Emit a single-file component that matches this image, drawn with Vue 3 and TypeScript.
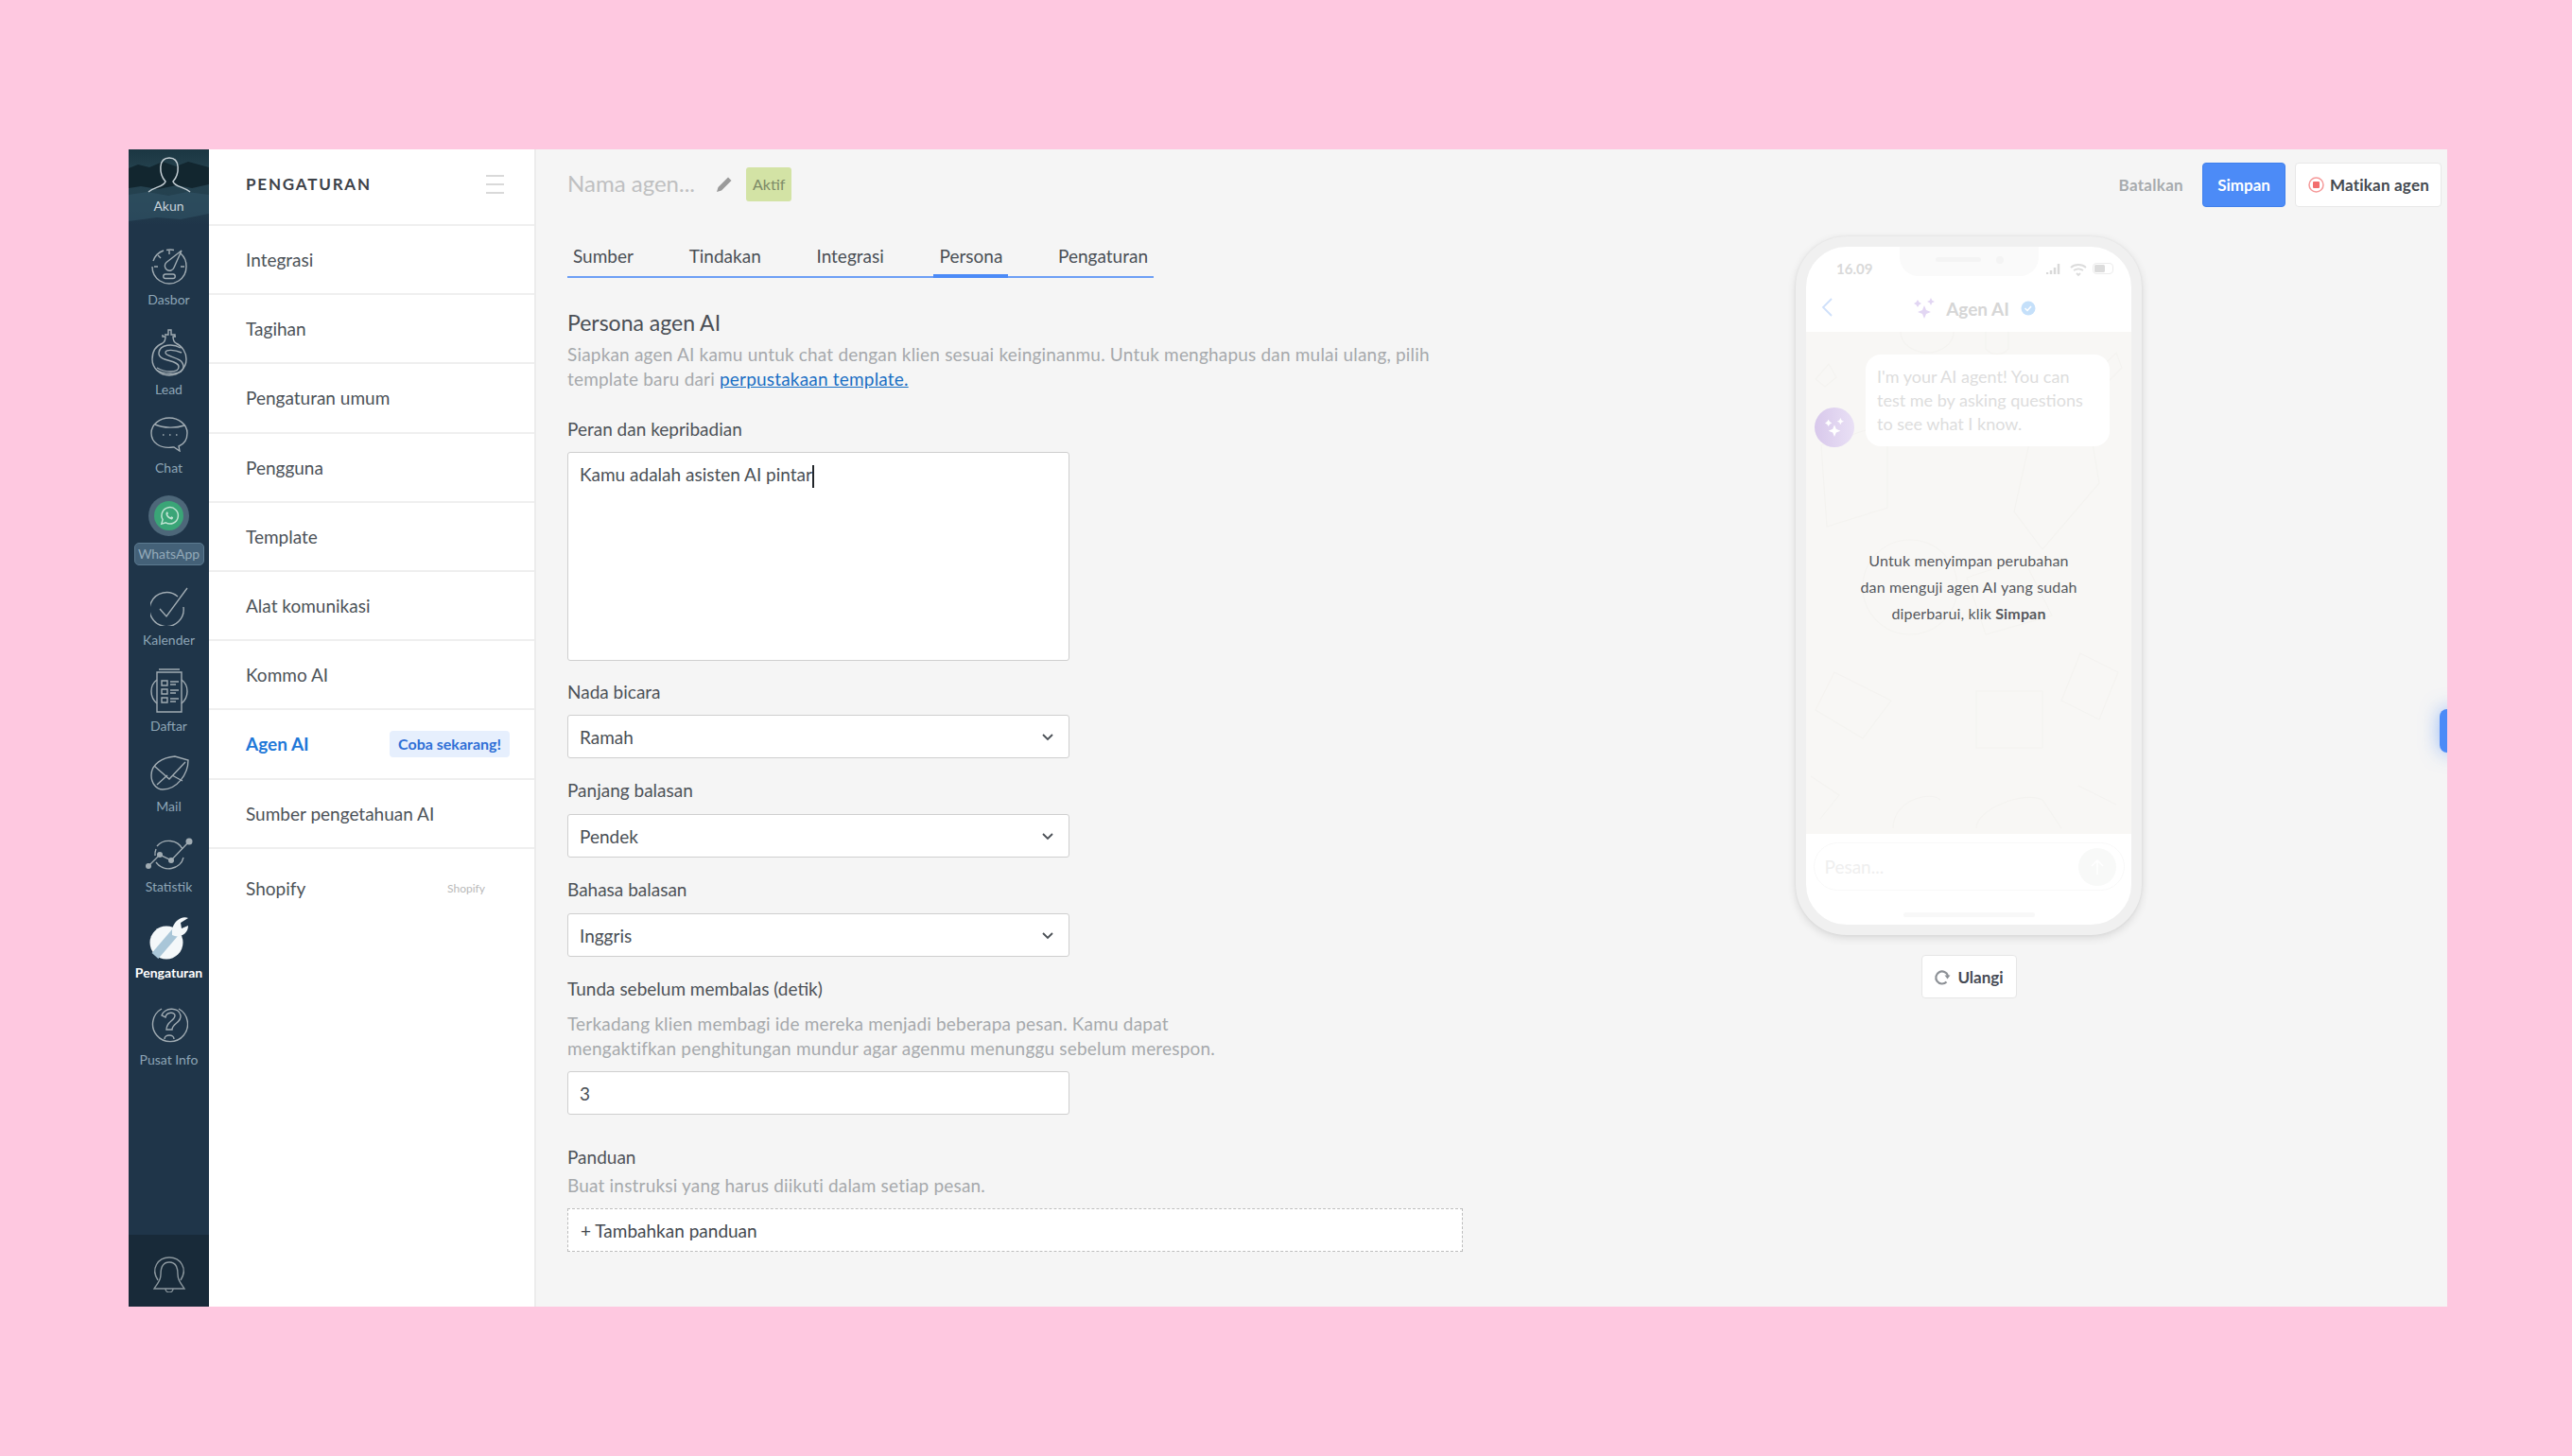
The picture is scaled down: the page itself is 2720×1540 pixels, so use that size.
<script setup lang="ts">
interface SideItem {
  label: string
  h: number
  w: number
  ih: number
  pb: number
  paths: string[]
  dots?: number[][]
}

const sideItems: SideItem[] = [
  {
    label: 'Dasbor', h: 88, w: 40, ih: 40, pb: 6,
    paths: [
      'M14 3A18 18 0 0 0 3 14M2 20a18 18 0 0 0 8 15c6 4 14 4 20 0a18 18 0 0 0 8-15 18 18 0 0 0-6-14M17 2.500a18 18 0 0 1 8 0',
      'M20 3v4M4 20h4M36 20h-4M8 8l3 3',
      'M33 3L25 21a5 5 0 1 1-8-5.500Z',
      'M16 28h8a2.200 2.200 0 0 1 0 4.500h-8a2.200 2.200 0 0 1 0-4.500Z'
    ]
  },
  {
    label: 'Lead', h: 95, w: 38, ih: 50, pb: 5,
    paths: [
      'M12 15C4 18 1 25 1 32a18 17 0 0 0 36 0c0-7-4-14-11-17',
      'M12 15c3-2 3-4 3-7h-3V6M26 15c-3-2-3-4-3-7h3M14 6h4V1h3v5h4v2',
      'M31 20c-8-5-22-4-23 5-1 10 21 7 21 15 0 7-15 6-23 1',
      'M32 25c-7-3-17-4-17 0 0 5 19 4 19 15 0 9-20 9-29 3'
    ]
  },
  {
    label: 'Chat', h: 83, w: 40, ih: 37, pb: 8,
    paths: [
      'M24 32C10 34 1 27 1 17 1 8 10 1 20 1s19 7 19 16c0 7-4 12-9 14l1 5-6-4Z',
      'M5 8c9 4 22 4 31 1',
      'M13 19h1.500M20 19h1.500M27 19h1.500'
    ]
  },
  {
    label: 'Kalender', h: 88, w: 40, ih: 41, pb: 6,
    paths: [
      'M29 10A18 18 0 1 0 35 21',
      'M10 23l7 8L39 1'
    ]
  },
  {
    label: 'Daftar', h: 91, w: 40, ih: 47, pb: 5,
    paths: [
      'M7 4h26v42H7ZM9 1h22',
      'M7 12C-1 18-1 30 7 37M33 12c8 6 8 18 0 25',
      'M12 13h6v5h-6ZM12 22h6v5h-6ZM12 31h6v5h-6Z',
      'M21 14h9M21 17h6M21 23h9M21 26h6M21 32h9M21 35h6'
    ]
  },
  {
    label: 'Mail', h: 85, w: 42, ih: 37, pb: 8,
    paths: [
      'M2 21C2 9 14 2 27 1l14 4c0 15-12 31-27 31C7 36 2 29 2 21Z',
      'M5 11l16 14L38 7M8 31l11-10M35 27l-11-6'
    ]
  },
  {
    label: 'Statistik', h: 85, w: 51, ih: 36, pb: 8,
    paths: [
      'M13 10a16 15 0 0 1 27 3M41 22a16 15 0 0 1-29 5M11 20a16 15 0 0 1 1-7',
      'M4 31L16 19l12 6L47 5'
    ],
    dots: [[4, 31, 3], [16, 19, 3], [28, 25, 3], [47, 5, 3.5]]
  },
  {
    label: 'Pusat Info', h: 92, w: 40, ih: 42, pb: 8,
    paths: [
      'M12 5A18.500 18.500 0 1 0 30 5',
      'M12 12c2-8 18-10 20 0 1 8-9 8-9 15h-6c0-9 9-9 9-15 0-4-9-4-10 2Z',
      'M15 37a5 4 0 0 1 10 0'
    ]
  }
]
</script>

<template>
  <div class="page">
    <div class="app">
      <aside class="side">
        <div class="side-user">
          <svg class="user-bg" width="85" height="80" viewBox="0 0 85 80">
            <path d="M0 20l10-4 12 3 14-6 14 5 13-5 22 6v18l-18 4-16-3-20 4-18-3-13 2Z" fill="#12262f" />
            <path d="M0 48l20-3 22 4 20-4 23 3v20l-30 6-25-2-30 4Z" fill="#2f5062" opacity="0.7" />
          </svg>
          <svg class="user-pic" width="46" height="38" viewBox="0 0 46 38" fill="none">
            <path d="M1 37c7-6 16-5 18-11C12 18 11 1 23 1s11 17 4 25c2 6 11 5 18 11" />
          </svg>
          <span>Akun</span>
        </div>

        <template v-for="(item, i) in sideItems" :key="item.label">
          <a class="side-item" :style="{ height: item.h + 'px' }">
            <svg
              :width="item.w"
              :height="item.ih"
              :viewBox="`0 0 ${item.w} ${item.ih}`"
              :style="{ marginBottom: item.pb + 'px' }"
              fill="none"
            >
              <path v-for="d in item.paths" :key="d" :d="d" />
              <circle v-for="c in item.dots" :key="c[0]" :cx="c[0]" :cy="c[1]" :r="c[2]" class="dot" />
            </svg>
            <span>{{ item.label }}</span>
          </a>

          <a v-if="i === 2" class="side-item side-wa">
            <div class="wa-ring">
              <div class="wa-dot">
                <svg width="22" height="22" viewBox="0 0 24 24" fill="none">
                  <path d="M3 21l1.500-5A9.500 9.500 0 1 1 8 19.500Z" />
                  <path class="wa-phone" d="M8.500 7.500c1-1 1.500-.8 2 .3l.5 1.200-1 1.200c.7 1.400 1.800 2.500 3.300 3.200l1.200-1.100 1.700.9c.6.500.2 1.600-.7 2.300-3 1.300-9-4.500-7-7.800Z" />
                </svg>
              </div>
            </div>
            <span>WhatsApp</span>
          </a>

          <a v-if="i === 6" class="side-item side-active">
            <svg width="42" height="47" viewBox="0 0 42 47">
              <circle cx="18" cy="29" r="17.500" fill="#f4f8fa" />
              <path d="M6 43L30 15" stroke="#a9c6d8" stroke-width="9" />
              <path d="M24 16C25 6 35 0 41 3l-8 5 1 6 7-3c0 9-9 14-17 10Z" fill="#f4f8fa" />
            </svg>
            <span>Pengaturan</span>
          </a>
        </template>

        <div class="side-bell">
          <svg width="38" height="38" viewBox="0 0 38 38" fill="none">
            <path d="M7 25C-1 13 7 1 19 1s20 12 12 24" />
            <path d="M19 6c-8 0-9 7-9 13 0 7-4 10-7 15h32c-3-5-7-8-7-15 0-6-1-13-9-13Z" />
            <path d="M15 34a4 4 0 0 0 8 0" />
          </svg>
        </div>
      </aside>

      <nav class="menu">
        <div class="menu-head">
          <h2>PENGATURAN</h2>
          <div class="burger"><i /><i /><i /></div>
        </div>
        <a class="menu-item">Integrasi</a>
        <a class="menu-item">Tagihan</a>
        <a class="menu-item">Pengaturan umum</a>
        <a class="menu-item">Pengguna</a>
        <a class="menu-item">Template</a>
        <a class="menu-item">Alat komunikasi</a>
        <a class="menu-item">Kommo AI</a>
        <a class="menu-item menu-item--active">Agen AI <span class="try">Coba sekarang!</span></a>
        <a class="menu-item">Sumber pengetahuan AI</a>
        <a class="menu-item menu-item--last">Shopify <span class="tag">Shopify</span></a>
      </nav>

      <main class="main">
        <header class="topbar">
          <div class="agent-name">Nama agen...</div>
          <svg class="pencil" width="18" height="18" viewBox="0 0 18 18">
            <path d="M13 1.500l3.500 3.500L6 15.500 1 17l1.500-5Z" fill="#9a9a9a" />
          </svg>
          <span class="status">Aktif</span>
          <div class="top-actions">
            <span class="cancel">Batalkan</span>
            <button class="btn-save">Simpan</button>
            <button class="btn-stop">
              <svg width="17" height="17" viewBox="0 0 17 17" fill="none">
                <circle cx="8.500" cy="8.500" r="7.500" stroke="#f59a9a" stroke-width="1.500" />
                <rect x="5" y="5" width="7" height="7" rx="1" fill="#f26d6d" />
              </svg>
              Matikan agen
            </button>
          </div>
        </header>

        <div class="content">
          <section class="form">
            <div class="tabs">
              <a class="tab">Sumber</a>
              <a class="tab">Tindakan</a>
              <a class="tab">Integrasi</a>
              <a class="tab tab--active">Persona</a>
              <a class="tab">Pengaturan</a>
            </div>

            <h1>Persona agen AI</h1>
            <p class="desc">
              Siapkan agen AI kamu untuk chat dengan klien sesuai keinginanmu. Untuk menghapus dan mulai ulang, pilih
              template baru dari <a class="link">perpustakaan template.</a>
            </p>

            <label class="lbl lbl--first">Peran dan kepribadian</label>
            <div class="textarea">Kamu adalah asisten AI pintar<i class="caret" /></div>

            <label class="lbl lbl--tone">Nada bicara</label>
            <div class="select">Ramah
              <svg width="14" height="9" viewBox="0 0 14 9" fill="none"><path d="M2 2l5 5 5-5" /></svg>
            </div>

            <label class="lbl">Panjang balasan</label>
            <div class="select">Pendek
              <svg width="14" height="9" viewBox="0 0 14 9" fill="none"><path d="M2 2l5 5 5-5" /></svg>
            </div>

            <label class="lbl">Bahasa balasan</label>
            <div class="select">Inggris
              <svg width="14" height="9" viewBox="0 0 14 9" fill="none"><path d="M2 2l5 5 5-5" /></svg>
            </div>

            <label class="lbl lbl--delay">Tunda sebelum membalas (detik)</label>
            <p class="desc desc--help">
              Terkadang klien membagi ide mereka menjadi beberapa pesan. Kamu dapat<br />
              mengaktifkan penghitungan mundur agar agenmu menunggu sebelum merespon.
            </p>
            <div class="select select--num">3</div>

            <label class="lbl lbl--guide">Panduan</label>
            <p class="desc desc--guide">Buat instruksi yang harus diikuti dalam setiap pesan.</p>
            <div class="add-guide">+ Tambahkan panduan</div>
          </section>

          <section class="preview">
            <div class="phone">
              <div class="phone-top">
                <div class="notch"><i class="speaker" /><i class="cam" /></div>
                <div class="statusbar">
                  <span>16.09</span>
                  <svg width="72" height="16" viewBox="0 0 72 16" fill="none">
                    <path d="M1 12v2M5 10v4M9 7v7M13 3v11" stroke="#d9d9d9" stroke-width="2.500" />
                    <path d="M26 7c4-4 12-4 16 0M29 10c3-2 7-2 10 0M32 13l2 2 2-2" stroke="#dcdcdc" stroke-width="1.800" />
                    <rect x="49.500" y="2.500" width="21" height="11" rx="3.500" stroke="#ececec" />
                    <rect x="51" y="4" width="11" height="8" rx="1.500" fill="#dcdcdc" />
                  </svg>
                </div>
                <div class="titlebar">
                  <svg class="back" width="12" height="20" viewBox="0 0 12 20" fill="none">
                    <path d="M11 1L2 10l9 9" stroke="#cfe0fa" stroke-width="1.800" />
                  </svg>
                  <svg width="22" height="22" viewBox="0 0 22 22" fill="#e2d6f3">
                    <path d="M11 8l2 5 5 2-5 2-2 5-2-5-5-2 5-2ZM4 2l1.500 2.500L8 6 5.500 7.500 4 10 2.500 7.500 0 6l2.500-1.500ZM18 0l1.300 2.700L22 4l-2.700 1.300L18 8l-1.300-2.700L14 4l2.700-1.300Z" />
                  </svg>
                  <b>Agen AI</b>
                  <svg width="16" height="16" viewBox="0 0 16 16">
                    <circle cx="8" cy="8" r="7.500" fill="#c5e0fa" />
                    <path d="M4.500 8l2.500 2.500 4-4.500" fill="none" stroke="#fff" stroke-width="1.500" />
                  </svg>
                </div>
              </div>

              <div class="chat">
                <svg class="doodle" width="345" height="531" viewBox="0 0 345 531" fill="none" stroke="#f4f3f0" stroke-width="1.200">
                  <path d="M10 50l14-16 8 14-12 10ZM100 0a28 22 0 0 0 56 0M190 0v18a16 16 0 0 0 24 0V0M310 40l18-18 6 16-14 14Z" />
                  <path d="M16 120l70-24v90l-64 20ZM240 100h60l10 60-60 70-30-40Z" />
                  <path d="M60 270a50 50 0 1 0 100 0 50 50 0 1 0-100 0ZM170 260l60-20 30 60-70 20Z" />
                  <path d="M30 360l60 30-30 40-50-30ZM180 380h70v60h-70ZM290 340l40 20-20 50-40-20Z" />
                  <path d="M5 470l30 20-20 25M92 525c0-30 40-40 50-30M180 525c0-20 50-40 70-30l20 30M288 480l40 20" />
                </svg>
                <div class="msg">
                  <div class="avatar">
                    <svg width="20" height="20" viewBox="0 0 22 22" fill="#fff">
                      <path d="M11 8l2 5 5 2-5 2-2 5-2-5-5-2 5-2ZM4 2l1.500 2.500L8 6 5.500 7.500 4 10 2.500 7.500 0 6l2.500-1.500ZM18 0l1.300 2.700L22 4l-2.700 1.300L18 8l-1.300-2.700L14 4l2.700-1.300Z" />
                    </svg>
                  </div>
                  <div class="bubble">I'm your AI agent! You can test me by asking questions to see what I know.</div>
                </div>
                <p class="save-note">
                  Untuk menyimpan perubahan<br />
                  dan menguji agen AI yang sudah<br />
                  diperbarui, klik <b>Simpan</b>
                </p>
              </div>

              <div class="phone-bottom">
                <div class="composer">
                  <span>Pesan...</span>
                  <div class="send">
                    <svg width="16" height="18" viewBox="0 0 16 18" fill="none">
                      <path d="M8 17V2M2 8l6-6 6 6" stroke="#fff" stroke-width="1.500" />
                    </svg>
                  </div>
                </div>
                <i class="home-bar" />
              </div>
            </div>

            <button class="btn-reset">
              <svg width="18" height="18" viewBox="0 0 18 18" fill="none">
                <path d="M15 8a6.500 6.500 0 1 0-1.500 6.500" stroke="#8d9196" stroke-width="2.200" />
                <path d="M11.500 7.500h6l-3 4Z" fill="#8d9196" />
              </svg>
              Ulangi
            </button>
          </section>
        </div>

        <div class="edge-tab" />
      </main>
    </div>
  </div>
</template>

<style>
html,
body {
  margin: 0;
  background: #fec8e0;
}
</style>

<style scoped>
* {
  box-sizing: border-box;
}

.page {
  width: 2720px;
  height: 1540px;
  padding: 158px 132px 158px 136px;
  background: #fec8e0;
  font-family: Lato, "Open Sans", sans-serif;
  font-size: 19px;
  color: #4a4f55;
}

.app {
  display: flex;
  width: 2452px;
  height: 1224px;
  overflow: hidden;
  background: #f5f5f5;
}

/* dark rail */
.side {
  display: flex;
  flex-direction: column;
  align-items: stretch;
  width: 85px;
  flex: none;
  background: #1f3549;
}

.side-user {
  position: relative;
  display: flex;
  flex-direction: column;
  align-items: center;
  height: 80px;
  padding-top: 8px;
  background: linear-gradient(180deg, #1b3642 0%, #25434f 30%, #24404f 70%, #1f3549 100%);
  color: #c9d3da;
  font-size: 14px;
  line-height: 18px;
}

.user-bg {
  position: absolute;
  left: 0;
  top: 0;
}

.user-pic {
  position: relative;
  margin-bottom: 5px;
  stroke: #c4ced4;
  stroke-width: 1.500;
}

.side-user span {
  position: relative;
}

.side-item {
  display: flex;
  flex-direction: column;
  align-items: center;
  justify-content: flex-end;
  color: #8ea5b6;
  font-size: 14px;
  line-height: 18px;
}

.side-item svg {
  stroke: #a1acb3;
  stroke-width: 1.400;
  flex: none;
}

.side-item .dot {
  fill: #a1acb3;
  stroke: none;
}

.side-wa {
  height: 94px;
}

.wa-ring {
  display: flex;
  align-items: center;
  justify-content: center;
  width: 43px;
  height: 43px;
  margin-bottom: 7px;
  border-radius: 50%;
  background: #4d6779;
}

.wa-dot {
  display: flex;
  align-items: center;
  justify-content: center;
  width: 31px;
  height: 31px;
  border-radius: 50%;
  background: #3aa577;
}

.side-item .wa-dot svg {
  stroke: #bfe3d2;
  stroke-width: 1.600;
}

.side-item .wa-dot .wa-phone {
  fill: #bfe3d2;
  stroke: none;
}

.side-wa span {
  width: 74px;
  height: 24px;
  border: 1px solid #5c7a90;
  border-radius: 5px;
  background: #446178;
  text-align: center;
  line-height: 22px;
  color: #93a9b8;
}

.side-active {
  height: 91px;
  color: #fff;
  font-weight: 700;
}

.side-active svg {
  margin-bottom: 5px;
  stroke: none;
  stroke-width: 0;
}

.side-bell {
  display: flex;
  align-items: center;
  justify-content: center;
  margin-top: auto;
  height: 76px;
  padding-top: 8px;
  background: #182a39;
}

.side-bell svg {
  stroke: #8b979e;
  stroke-width: 1.400;
}

/* settings menu */
.menu {
  width: 346px;
  flex: none;
  background: #fff;
  border-right: 2px solid #ececec;
}

.menu-head {
  display: flex;
  align-items: center;
  justify-content: space-between;
  height: 81px;
  padding: 0 32px 6px 39px;
  border-bottom: 2px solid #efefef;
}

.menu-head h2 {
  margin: 0;
  font-size: 17px;
  font-weight: 700;
  letter-spacing: 1.800px;
  color: #3d4249;
}

.burger {
  display: flex;
  flex-direction: column;
  gap: 7px;
  width: 19px;
}

.burger i {
  height: 2px;
  background: #d9d9d9;
}

.menu-item {
  display: flex;
  align-items: center;
  justify-content: space-between;
  height: 73.200px;
  padding: 0 26px 0 39px;
  border-bottom: 2px solid #efefef;
  color: #4c5258;
}

.menu-item--active {
  color: #1f78d8;
  font-weight: 700;
}

.menu-item--last {
  height: 84px;
  padding-right: 52px;
  border-bottom: 0;
}

.try {
  height: 28px;
  padding: 0 9px;
  border-radius: 4px;
  background: #e6effd;
  color: #2f6fd6;
  font-size: 16px;
  line-height: 28px;
}

.tag {
  font-size: 12px;
  color: #b9b9b9;
}

/* main area */
.main {
  position: relative;
  flex: 1;
  min-width: 0;
  padding-left: 33px;
}

.topbar {
  display: flex;
  align-items: center;
  height: 74px;
  padding-right: 6px;
}

.agent-name {
  width: 157px;
  padding-bottom: 3px;
  font-size: 24px;
  color: #bfc0c1;
}

.pencil {
  flex: none;
}

.status {
  height: 36px;
  margin-left: 14px;
  padding: 0 7px;
  border-radius: 3px;
  background: #d3e3a5;
  color: #7c8967;
  font-size: 16px;
  line-height: 36px;
}

.top-actions {
  display: flex;
  align-items: center;
  margin-left: auto;
}

.cancel {
  margin-right: 20px;
  color: #a7abae;
  font-size: 17px;
  font-weight: 700;
  letter-spacing: 0.300px;
}

.btn-save,
.btn-stop,
.btn-reset {
  font: inherit;
  font-size: 17px;
  font-weight: 700;
  border-radius: 4px;
}

.btn-save {
  width: 88px;
  height: 47px;
  border: 1px solid #4080ec;
  background: #4c8bf7;
  color: #fff;
}

.btn-stop {
  display: flex;
  align-items: center;
  gap: 6px;
  width: 155px;
  height: 47px;
  margin-left: 10px;
  padding: 0 0 0 13px;
  border: 1px solid #e8e8e8;
  background: #fff;
  color: #444950;
  letter-spacing: 0.200px;
}

.content {
  display: flex;
}

.form {
  width: 947px;
  flex: none;
}

.tabs {
  display: flex;
  justify-content: space-between;
  width: 620px;
  margin-top: 24px;
  border-bottom: 2px solid #6d9ff5;
}

.tab {
  height: 38px;
  margin-bottom: -2px;
  padding: 0 6px;
  border-bottom: 4px solid transparent;
  line-height: 30px;
  color: #4a4f55;
}

.tab--active {
  border-bottom-color: #4c8bf7;
}

h1 {
  margin: 32px 0 0;
  font-size: 23px;
  font-weight: 400;
  line-height: 30px;
  color: #4a4f55;
}

.desc {
  margin: 6px 0 0;
  line-height: 26px;
  letter-spacing: 0.190px;
  color: #a6a9ac;
}

.link {
  color: #1a6fc4;
  text-decoration: underline;
}

.lbl {
  display: block;
  margin-top: 22px;
  margin-bottom: 13px;
  line-height: 24px;
  color: #4d5258;
}

.lbl--first {
  margin-top: 28px;
  margin-bottom: 12px;
}

.lbl--tone {
  margin-top: 21px;
  margin-bottom: 12px;
}

.lbl--delay {
  margin-bottom: 12px;
}

.textarea {
  width: 531px;
  height: 221px;
  padding: 10px 12px;
  border: 1px solid #cfcfcf;
  border-radius: 3px;
  background: #fff;
  line-height: 26px;
}

.caret {
  display: inline-block;
  width: 2px;
  height: 24px;
  vertical-align: middle;
  background: #22262a;
}

.select {
  display: flex;
  align-items: center;
  justify-content: space-between;
  width: 531px;
  height: 46px;
  padding: 0 15px 0 12px;
  border: 1px solid #cfcfcf;
  border-radius: 3px;
  background: #fff;
}

.select svg {
  stroke: #4a4f55;
  stroke-width: 1.800;
}

.select--num {
  margin-top: 11px;
}

.desc--help {
  margin: 0;
}

.lbl--guide {
  margin-top: 33px;
  margin-bottom: 5px;
}

.desc--guide {
  margin: 0;
}

.add-guide {
  display: flex;
  align-items: center;
  height: 46px;
  margin-top: 11px;
  padding-left: 13px;
  border: 1px dashed #bdbdbd;
  background: #fff;
  color: #44494f;
}

/* phone preview */
.preview {
  display: flex;
  flex-direction: column;
  align-items: center;
  width: 366px;
  margin-left: 352px;
  padding-top: 18px;
  flex: none;
}

.phone {
  display: flex;
  flex-direction: column;
  width: 366px;
  height: 739px;
  border: 11px solid #f0f0f0;
  border-radius: 54px;
  overflow: hidden;
  background: #fff;
  box-shadow: 0 3px 10px rgba(0, 0, 0, 0.12), 0 0 3px rgba(0, 0, 0, 0.06);
}

.phone-top {
  position: relative;
  height: 90px;
  flex: none;
}

.notch {
  position: absolute;
  top: 0;
  left: 99px;
  display: flex;
  align-items: center;
  justify-content: center;
  gap: 16px;
  width: 147px;
  height: 31px;
  padding-bottom: 4px;
  border-radius: 0 0 20px 20px;
  background: #fafafa;
}

.speaker {
  width: 48px;
  height: 5px;
  border-radius: 3px;
  background: #f4f4f4;
}

.cam {
  width: 8px;
  height: 8px;
  border-radius: 50%;
  background: #f4f4f4;
}

.statusbar {
  display: flex;
  align-items: center;
  justify-content: space-between;
  height: 46px;
  padding: 0 18px 0 32px;
  color: #d9d9d9;
  font-size: 15px;
  font-weight: 700;
}

.titlebar {
  position: relative;
  display: flex;
  align-items: center;
  justify-content: center;
  gap: 12px;
  height: 44px;
  padding: 0 0 6px 13px;
  color: #d6d6d6;
  font-size: 19px;
}

.back {
  position: absolute;
  left: 16px;
  top: 8px;
}

.chat {
  position: relative;
  flex: 1;
  padding-top: 24px;
  background: #f8f7f5;
}

.doodle {
  position: absolute;
  left: 0;
  top: 0;
}

.msg {
  position: relative;
  display: flex;
  align-items: flex-end;
  gap: 12px;
  padding-left: 9px;
}

.avatar {
  display: flex;
  align-items: center;
  justify-content: center;
  width: 42px;
  height: 42px;
  margin-bottom: -1px;
  border-radius: 50%;
  background: linear-gradient(90deg, #d8c8eb, #e9e0f5);
}

.bubble {
  width: 258px;
  height: 97px;
  padding: 11px 12px;
  border-radius: 16px;
  background: #fff;
  color: #dddddd;
  font-size: 18px;
  line-height: 25px;
}

.save-note {
  position: relative;
  margin: 107px 0 0;
  text-align: center;
  font-size: 16px;
  line-height: 28px;
  letter-spacing: 0.150px;
  color: #56595e;
}

.phone-bottom {
  display: flex;
  flex-direction: column;
  align-items: center;
  height: 96px;
  flex: none;
  padding-top: 9px;
}

.composer {
  display: flex;
  align-items: center;
  justify-content: space-between;
  width: 329px;
  height: 51px;
  padding: 0 8px 0 11px;
  border: 1px solid #f8f8f8;
  border-radius: 26px;
  color: #efefef;
}

.send {
  display: flex;
  align-items: center;
  justify-content: center;
  width: 40px;
  height: 40px;
  border-radius: 50%;
  background: #f8f9f8;
}

.home-bar {
  width: 139px;
  height: 5px;
  margin-top: 23px;
  border-radius: 3px;
  background: #f8f8f8;
}

.btn-reset {
  display: flex;
  align-items: center;
  justify-content: center;
  gap: 7px;
  width: 101px;
  height: 46px;
  margin-top: 21px;
  border: 1px solid #e6e6e6;
  background: #fff;
  color: #464b55;
}

.edge-tab {
  position: absolute;
  right: -16px;
  top: 592px;
  width: 24px;
  height: 46px;
  border-radius: 8px;
  background: #4c8bf7;
  box-shadow: 0 0 20px rgba(76, 139, 247, 0.55);
}
</style>
